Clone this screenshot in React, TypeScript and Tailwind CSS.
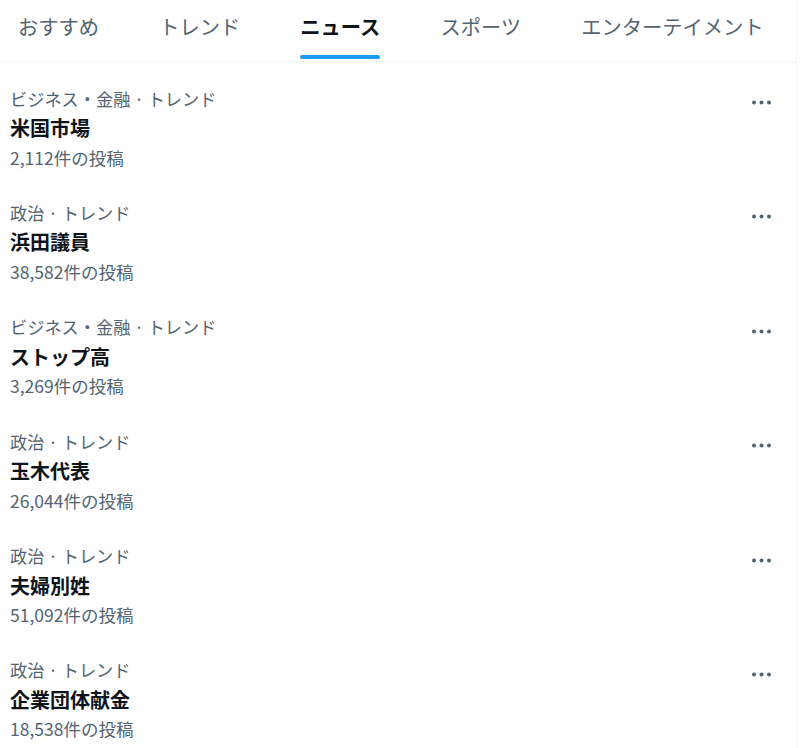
import React from 'react';

const font = { fontFamily: '"Noto Sans CJK JP", "Noto Sans", sans-serif' };

const tabs = ['おすすめ', 'トレンド', 'ニュース', 'スポーツ', 'エンターテイメント'];

const trends = [
  { cat: 'ビジネス・金融 · トレンド', title: '米国市場', count: '2,112件の投稿' },
  { cat: '政治 · トレンド', title: '浜田議員', count: '38,582件の投稿' },
  { cat: 'ビジネス・金融 · トレンド', title: 'ストップ高', count: '3,269件の投稿' },
  { cat: '政治 · トレンド', title: '玉木代表', count: '26,044件の投稿' },
  { cat: '政治 · トレンド', title: '夫婦別姓', count: '51,092件の投稿' },
  { cat: '政治 · トレンド', title: '企業団体献金', count: '18,538件の投稿' },
];

const Dots: React.FC = () => (
  <svg width="19" height="5" viewBox="0 0 19 5" className="fill-[#536471]">
    <circle cx="2" cy="2.5" r="2" />
    <circle cx="9.5" cy="2.5" r="2" />
    <circle cx="17" cy="2.5" r="2" />
  </svg>
);

const App: React.FC = () => {
  return (
    <div className="w-[808px] h-[748px] bg-white overflow-hidden" style={font}>
      <div className="w-[797px] h-full border-r border-[#eff3f4]">
        {/* Tabs */}
        <div className="flex h-[62px] border-b border-[#eff3f4] pl-[18px] gap-[60px]">
          {tabs.map((t) => {
            const active = t === 'ニュース';
            return (
              <div key={t} className="relative flex items-center h-full pb-[8px]">
                <span
                  className={
                    active
                      ? 'text-[20.3px] font-bold text-[#0f1419] leading-none'
                      : 'text-[20.3px] text-[#536471] leading-none'
                  }
                >
                  {t}
                </span>
                {active && (
                  <div className="absolute left-0 right-0 top-[55px] h-[4px] rounded-full bg-[#1d9bf0]" />
                )}
              </div>
            );
          })}
        </div>

        {/* Trend list */}
        <div>
          {trends.map((r) => (
            <div key={r.title} className="relative h-[114.4px] pl-[10px] pt-[21.5px]">
              <div className="text-[17.2px] leading-[29.5px] text-[#536471]">{r.cat}</div>
              <div className="text-[20px] leading-[29.5px] font-bold text-[#0f1419]">{r.title}</div>
              <div className="text-[17.5px] leading-[29.5px] text-[#536471]">{r.count}</div>
              <div className="absolute right-[25px] top-[38px]">
                <Dots />
              </div>
            </div>
          ))}
        </div>
      </div>
    </div>
  );
};

export default App;
